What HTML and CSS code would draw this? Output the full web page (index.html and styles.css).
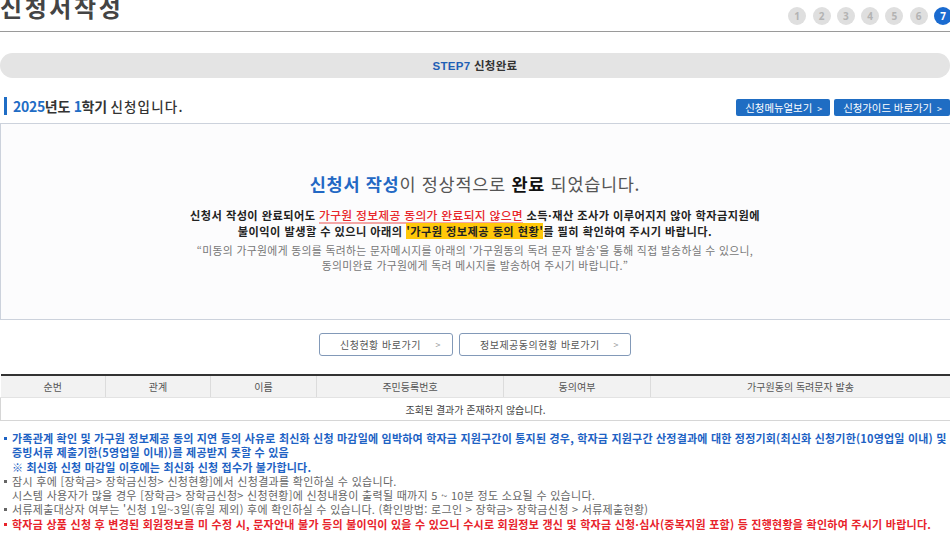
FILE: index.html
```html
<!DOCTYPE html>
<html lang="ko">
<head>
<meta charset="utf-8">
<title>신청서작성</title>
<link rel="stylesheet" href="styles.css">
</head>
<body>
<div class="page">
  <header class="top">
    <h1 class="title">신청서작성</h1>
    <ol class="steps">
      <li>1</li><li>2</li><li>3</li><li>4</li><li>5</li><li>6</li><li class="on">7</li>
    </ol>
  </header>

  <div class="stepbar"><span class="step-no">STEP7</span> 신청완료</div>

  <div class="yearline">
    <h2 class="year"><em>2025</em>년도 <em>1</em>학기 <span class="year-tail">신청입니다.</span></h2>
    <div class="topbtns">
      <a class="btn-blue">신청메뉴얼보기 <span class="chev">&gt;</span></a>
      <a class="btn-blue">신청가이드 바로가기 <span class="chev">&gt;</span></a>
    </div>
  </div>

  <section class="done">
    <p class="done-title"><b class="blue">신청서 작성</b>이 정상적으로 <b class="dark">완료</b> 되었습니다.</p>
    <p class="done-warn">신청서 작성이 완료되어도 <span class="red-u">가구원 정보제공 동의가 완료되지 않으면</span> 소득·재산 조사가 이루어지지 않아 학자금지원에<br>불이익이 발생할 수 있으니 아래의 <span class="hl">'가구원 정보제공 동의 현황'</span>를 필히 확인하여 주시기 바랍니다.</p>
    <p class="done-sub">“미동의 가구원에게 동의를 독려하는 문자메시지를 아래의 '가구원동의 독려 문자 발송'을 통해 직접 발송하실 수 있으니,<br>동의미완료 가구원에게 독려 메시지를 발송하여 주시기 바랍니다.”</p>
  </section>

  <div class="actions">
    <a class="btn-line btn-a">신청현황 바로가기<span class="arr">&gt;</span></a>
    <a class="btn-line btn-b">정보제공동의현황 바로가기<span class="arr">&gt;</span></a>
  </div>

  <table class="members">
    <colgroup>
      <col class="c1"><col class="c2"><col class="c3"><col class="c4"><col class="c5"><col class="c6">
    </colgroup>
    <thead>
      <tr><th>순번</th><th>관계</th><th>이름</th><th>주민등록번호</th><th>동의여부</th><th>가구원동의 독려문자 발송</th></tr>
    </thead>
    <tbody>
      <tr><td colspan="6">조회된 결과가 존재하지 않습니다.</td></tr>
    </tbody>
  </table>

  <ul class="notes">
    <li class="n-blue"><span class="ln">가족관계 확인 및 가구원 정보제공 동의 지연 등의 사유로 최신화 신청 마감일에 임박하여 학자금 지원구간이 통지된 경우, 학자금 지원구간 산정결과에 대한 정정기회(최신화 신청기한(10영업일 이내) 및</span><span class="ln">증빙서류 제출기한(5영업일 이내))를 제공받지 못할 수 있음</span><span class="ln">※ 최신화 신청 마감일 이후에는 최신화 신청 접수가 불가합니다.</span></li>
    <li class="n-gray"><span class="ln">잠시 후에 [장학금&gt; 장학금신청&gt; 신청현황]에서 신청결과를 확인하실 수 있습니다.</span><span class="ln">시스템 사용자가 많을 경우 [장학금&gt; 장학금신청&gt; 신청현황]에 신청내용이 출력될 때까지 5 ~ 10분 정도 소요될 수 있습니다.</span></li>
    <li class="n-gray"><span class="ln">서류제출대상자 여부는 '신청 1일~3일(휴일 제외) 후에 확인하실 수 있습니다. (확인방법: 로그인 &gt; 장학금&gt; 장학금신청 &gt; 서류제출현황)</span></li>
    <li class="n-red"><span class="ln">학자금 상품 신청 후 변경된 회원정보를 미 수정 시, 문자안내 불가 등의 불이익이 있을 수 있으니 수시로 회원정보 갱신 및 학자금 신청·심사(중복지원 포함) 등 진행현황을 확인하여 주시기 바랍니다.</span></li>
  </ul>
</div>
</body>
</html>
```

FILE: styles.css
```css
html, body {
  margin: 0;
  padding: 0;
  overflow: hidden;
  background: #fff;
}
body {
  font-family: "Noto Sans CJK KR", "Noto Sans", sans-serif;
  color: #333;
}
.page {
  width: 952px;
}

/* header */
.top {
  display: flex;
  justify-content: space-between;
  align-items: flex-start;
  height: 31px;
  border-bottom: 1px solid #9a9a9a;
}
.title {
  margin: -5.5px 0 0 0;
  font-size: 24px;
  line-height: 24px;
  font-weight: 700;
  color: #444;
  letter-spacing: 2.6px;
}
.steps {
  list-style: none;
  display: flex;
  gap: 6.3px;
  margin: 7px 0 0 0;
  padding: 0;
}
.steps li {
  width: 18px;
  height: 18px;
  border-radius: 50%;
  background: #dfdfdf;
  color: #b3b3b3;
  font-size: 10px;
  font-weight: 700;
  line-height: 18px;
  text-align: center;
  font-family: "Open Sans", sans-serif;
}
.steps li.on {
  background: #1a6bd0;
  color: #fff;
}

/* step bar */
.stepbar {
  margin: 21px 0 0 0;
  height: 25px;
  line-height: 25px;
  border-radius: 13px;
  background: #e4e4e4;
  text-align: center;
  font-size: 11.5px;
  font-weight: 700;
  color: #333;
  width: 950px;
  letter-spacing: 0.3px;
}
.step-no {
  color: #1f5fb5;
  font-family: "Liberation Sans", sans-serif;
}

/* year line */
.yearline {
  display: flex;
  justify-content: space-between;
  align-items: center;
  margin-top: 17px;
  height: 21px;
  width: 950px;
}
.year {
  margin: 0 0 0 4px;
  padding-left: 6px;
  border-left: 3px solid #1f6dc5;
  font-size: 14px;
  line-height: 18px;
  font-weight: 700;
  color: #333;
  letter-spacing: -0.3px;
}
.year em {
  font-style: normal;
  color: #1f6dc5;
}
.year-tail {
  font-size: 13.5px;
  font-weight: 500;
  letter-spacing: 1.2px;
}
.topbtns {
  display: flex;
  gap: 4px;
  margin-top: 3px;
}
.btn-blue {
  display: block;
  height: 17px;
  line-height: 17px;
  padding: 0 8px 0 9px;
  background: #1f6dc3;
  color: #fff;
  font-size: 10.4px;
  border-radius: 2px;
}
.btn-blue .chev {
  font-size: 9px;
  margin-left: 2px;
}

/* completion box */
.done {
  margin-top: 7px;
  height: 197px;
  box-sizing: border-box;
  border: 1px solid #ccd2dc;
  background: #fcfcfd;
  display: flex;
  flex-direction: column;
  justify-content: center;
  align-items: center;
  text-align: center;
  width: 952px;
  padding-right: 2px;
}
.done p {
  margin: 0;
}
.done-title {
  font-size: 17.5px;
  line-height: 24px;
  letter-spacing: 0.7px;
  color: #555;
  padding-top: 1px;
}
.done-title .blue {
  color: #2368c4;
}
.done-title .dark {
  color: #111;
}
.done-warn {
  margin-top: 11px !important;
  font-size: 11.2px;
  line-height: 16px;
  letter-spacing: 0.45px;
  font-weight: 700;
  color: #222;
}
.red-u {
  font-size: 11.8px;
  font-weight: 500;
  color: #e8262b;
  letter-spacing: 0.3px;
  text-decoration: underline;
  text-decoration-color: #f4a7a7;
  text-decoration-thickness: 1.5px;
  text-underline-offset: 2px;
}
.hl {
  background: #ffc80a;
  color: #222;
}
.done-sub {
  margin-top: 4px !important;
  font-size: 10.8px;
  line-height: 15px;
  letter-spacing: 0.35px;
  color: #777;
}

/* action buttons */
.actions {
  display: flex;
  justify-content: center;
  gap: 6px;
  margin-top: 13px;
  width: 950px;
}
.btn-line {
  display: flex;
  align-items: center;
  justify-content: space-between;
  height: 23px;
  box-sizing: border-box;
  border: 1px solid #8299b8;
  border-radius: 3px;
  background: #fff;
  color: #555;
  font-size: 10px;
  letter-spacing: 0.5px;
  padding: 0 11px 0 20px;
}
.btn-a { width: 134px; }
.btn-b { width: 172px; }
.btn-line .arr {
  color: #999;
  font-size: 9px;
}

/* table */
.members {
  margin-top: 18px;
  width: 950px;
  border-collapse: collapse;
  table-layout: fixed;
  border-top: 2px solid #333;
  font-size: 10px;
}
.c1 { width: 105px; }
.c2 { width: 105px; }
.c3 { width: 106px; }
.c4 { width: 187px; }
.c5 { width: 147px; }
.members th {
  height: 21px;
  padding: 0;
  background: #f2f2f2;
  color: #555;
  font-weight: 400;
  border-left: 1px solid #dcdcdc;
  border-bottom: 1px solid #e3e3e3;
}
.members th:first-child {
  border-left: 0;
}
.members td {
  height: 22px;
  padding: 0;
  text-align: center;
  color: #444;
  border: 1px solid #d6d6d6;
  border-top: 0;
  border-right: 0;
}

/* notes */
.notes {
  list-style: none;
  margin: 10px 0 0 0;
  padding: 0;
  font-size: 11px;
  line-height: 14.3px;
}
.notes li {
  position: relative;
  padding-left: 12px;
}
.notes li::before {
  content: "";
  position: absolute;
  left: 4px;
  top: 6px;
  width: 3px;
  height: 3px;
  background: currentColor;
}
.notes .ln {
  display: block;
  white-space: nowrap;
}
.n-blue {
  color: #1d62c4;
  font-weight: 700;
  letter-spacing: 0.2px;
}
.n-gray {
  color: #666;
  letter-spacing: 0.3px;
}
.n-red {
  color: #e8232b;
  font-weight: 700;
  letter-spacing: 0.25px;
}
```
